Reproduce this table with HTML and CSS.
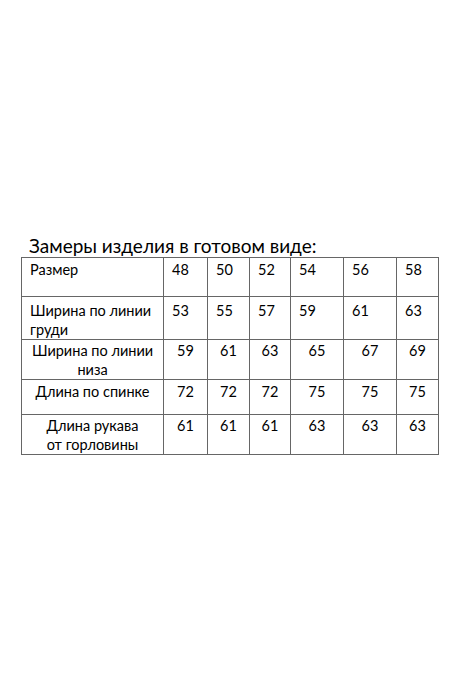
FILE: index.html
```html
<!DOCTYPE html>
<html lang="ru">
<head>
<meta charset="utf-8">
<link rel="stylesheet" href="styles.css">
</head>
<body>
<div class="page">
  <div class="title">Замеры изделия в готовом виде:</div>
  <table class="sizes">
    <colgroup>
      <col class="c-label">
      <col class="c1"><col class="c2"><col class="c3"><col class="c4"><col class="c5"><col class="c6">
    </colgroup>
    <tr class="r1 left">
      <td>Размер</td><td>48</td><td>50</td><td>52</td><td>54</td><td>56</td><td>58</td>
    </tr>
    <tr class="r2 left">
      <td>Ширина по линии груди</td><td>53</td><td>55</td><td>57</td><td>59</td><td>61</td><td>63</td>
    </tr>
    <tr class="r3 center">
      <td>Ширина по линии<br>низа</td><td>59</td><td>61</td><td>63</td><td>65</td><td>67</td><td>69</td>
    </tr>
    <tr class="r4 center">
      <td>Длина по спинке</td><td>72</td><td>72</td><td>72</td><td>75</td><td>75</td><td>75</td>
    </tr>
    <tr class="r5 center">
      <td>Длина рукава<br>от горловины</td><td>61</td><td>61</td><td>61</td><td>63</td><td>63</td><td>63</td>
    </tr>
  </table>
</div>
</body>
</html>
```
FILE: styles.css
```css
html, body {
  margin: 0;
  padding: 0;
  background: #ffffff;
}
.page {
  width: 460px;
  height: 690px;
  padding: 234px 0 0 21px;
  box-sizing: border-box;
  font-family: Lato, "Open Sans", sans-serif;
  color: #000;
}
.title {
  font-size: 19px;
  line-height: 23px;
  padding-left: 8px;
  height: 23px;
}
.sizes {
  border-collapse: collapse;
  table-layout: fixed;
  width: 417px;
  font-size: 14.5px;
  line-height: 19px;
}
.sizes td {
  border: 1px solid #666;
  padding: 2px 6px 0 8px;
  vertical-align: top;
  box-sizing: border-box;
}
.c-label { width: 142px; }
.c1 { width: 44px; }
.c2 { width: 42px; }
.c3 { width: 41px; }
.c4 { width: 53px; }
.c5 { width: 53px; }
.c6 { width: 42px; }
.left td { text-align: left; }
.center td { text-align: center; padding-left: 2px; padding-right: 2px; }
.r1 td { height: 39px; }
.r2 td { height: 41px; padding-top: 4px; }
.r3 td { height: 40px; padding-top: 1px; }
.r4 td { height: 35px; padding-top: 2px; }
.r5 td { height: 40px; padding-top: 1px; }
```
